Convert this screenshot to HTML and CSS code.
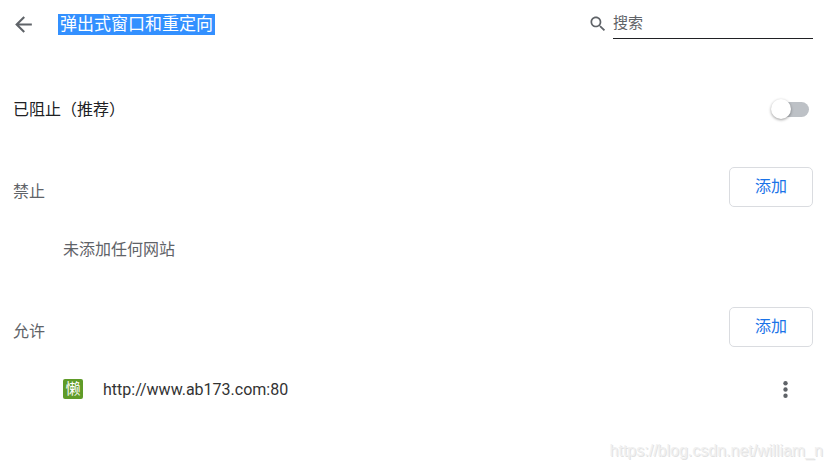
FILE: index.html
```html
<!doctype html>
<html lang="zh-CN">
<head>
	<meta charset="UTF-8">
	<meta name="viewport" content="width=device-width, initial-scale=1">
	<title>弹出式窗口和重定向</title>
	<link rel="stylesheet" href="styles.css">
</head>
<body>
	<div class="page">
		<header class="header">
			<button class="iconbtn" type="button" aria-label="返回">
				<svg width="25" height="25" viewBox="0 0 24 24"><path d="M20 11H7.83l5.59-5.59L12 4l-8 8 8 8 1.41-1.41L7.83 13H20z"/></svg>
			</button>
			<h1 class="title"><mark>弹出式窗口和重定向</mark></h1>
			<div class="search">
				<label for="search" aria-label="搜索">
					<svg width="20" height="20" viewBox="0 0 24 24"><path d="M15.5 14h-.79l-.28-.27C15.41 12.59 16 11.11 16 9.5 16 5.91 13.09 3 9.5 3S3 5.91 3 9.5 5.91 16 9.5 16c1.61 0 3.09-.59 4.23-1.57l.27.28v.79l5 4.99L20.49 19l-4.99-5zm-6 0C7.01 14 5 11.99 5 9.5S7.01 5 9.5 5 14 7.01 14 9.5 11.99 14 9.5 14z"/></svg>
				</label>
				<input id="search" type="text" placeholder="搜索">
			</div>
		</header>

		<div class="row">
			<label for="blocked">已阻止（推荐）</label>
			<input class="toggle" id="blocked" type="checkbox" role="switch">
		</div>

		<section class="section">
			<div class="sectionhead">
				<h2>禁止</h2>
				<button class="addbtn" type="button">添加</button>
			</div>
			<div class="row site empty">未添加任何网站</div>
		</section>

		<section class="section">
			<div class="sectionhead">
				<h2>允许</h2>
				<button class="addbtn" type="button">添加</button>
			</div>
			<div class="row site">
				<span class="favicon">懒</span>
				<span class="url">http://www.ab173.com:80</span>
				<button class="iconbtn more" type="button" aria-label="更多操作">
					<svg width="25" height="25" viewBox="0 0 24 24"><circle cx="12" cy="6" r="2.1"/><circle cx="12" cy="12" r="2.1"/><circle cx="12" cy="18" r="2.1"/></svg>
				</button>
			</div>
		</section>

		<footer class="watermark">https://blog.csdn.net/william_n</footer>
	</div>
</body>
</html>
```
FILE: styles.css
```css
*{
	box-sizing: border-box;
}
body{
	margin: 0;
	background: #fff;
	color: #202124;
	font-family: Roboto, "Noto Sans CJK SC", sans-serif;
	font-size: 16px;
	line-height: 24px;
}
button,input{
	font: inherit;
}
h1,h2{
	margin: 0;
	font-weight: 400;
}
svg{
	display: block;
	fill: #5f6368;
}
.page{
	padding: 0 18px 0 13px;
}
.header{
	display: flex;
	align-items: center;
	height: 48px;
	margin-bottom: 31px;
}
.iconbtn{
	padding: 0;
	border: 0;
	background: none;
	cursor: pointer;
}
.header .iconbtn{
	margin: 0 22px 0 -2px;
}
.title{
	font-size: 17px;
}
.title mark{
	display: block;
	padding: 0 2px;
	line-height: 21px;
	background: #3390ff;
	color: #fff;
}
.search{
	display: flex;
	align-items: center;
	gap: 5px;
	margin-left: auto;
}
.search input{
	width: 200px;
	height: 30px;
	padding: 0 0 2px;
	border: 0;
	border-bottom: 1px solid #202124;
	border-radius: 0;
	outline: 0;
	background: none;
	font-size: 15px;
}
.search input::placeholder{
	color: #5f6368;
	opacity: 1;
}
.row{
	display: flex;
	align-items: center;
	height: 60px;
}
.row label,.empty,.url{
	padding-top: 2px;
}
.toggle{
	appearance: none;
	position: relative;
	width: 34px;
	height: 15px;
	margin: 0 4px 0 auto;
	border-radius: 8px;
	background: #bdc1c6;
	cursor: pointer;
}
.toggle::before{
	content: "";
	position: absolute;
	top: -3px;
	left: -4px;
	width: 20px;
	height: 20px;
	border-radius: 50%;
	background: #fff;
	box-shadow: 0 1px 3px rgba(0,0,0,.4);
}
.toggle:checked{
	background: #8ab4f8;
}
.toggle:checked::before{
	left: 18px;
	background: #1a73e8;
}
.section{
	margin-top: 28px;
}
.sectionhead{
	display: flex;
	align-items: flex-end;
	justify-content: space-between;
	margin-bottom: 12px;
}
.sectionhead h2{
	font-size: 16px;
	line-height: 30px;
	color: #5f6368;
}
.addbtn{
	width: 84px;
	height: 40px;
	padding: 0;
	border: 1px solid #dadce0;
	border-radius: 5px;
	background: #fff;
	color: #1a73e8;
	cursor: pointer;
}
.site{
	padding-left: 50px;
}
.empty{
	color: #5f6368;
}
.favicon{
	width: 20px;
	height: 20px;
	margin-right: 20px;
	border-radius: 2px;
	background: #5f9b28;
	color: #fff;
	font-size: 15px;
	line-height: 20px;
	text-align: center;
}
.url{
	color: #333;
}
.more{
	margin: 0 15px 0 auto;
}
.watermark{
	margin: 20px -10px 0 0;
	color: #f0f0f0;
	font-family: "Liberation Sans", Arial, sans-serif;
	text-align: right;
	text-shadow: 1px 1px 0 #e2e2e2;
}
```
